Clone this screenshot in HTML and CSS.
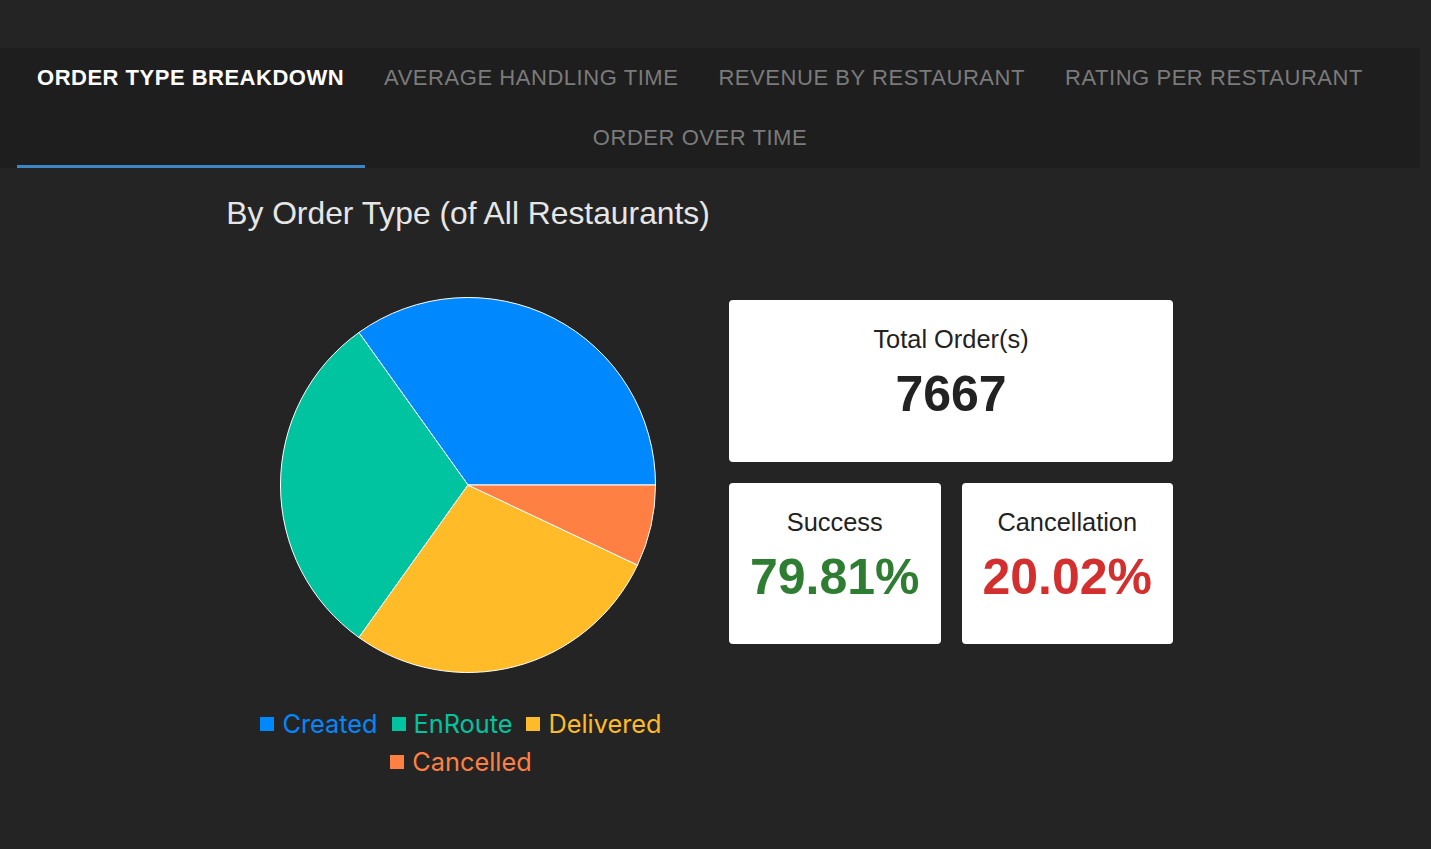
FILE: index.html
```html
<!DOCTYPE html>
<html lang="en">
<head>
<meta charset="utf-8">
<title>Order Type Breakdown</title>
<link rel="stylesheet" href="styles.css">
</head>
<body>
<div class="page">
  <div class="tabbar">
    <div class="tabs">
      <div class="tab active">Order Type Breakdown</div>
      <div class="tab">Average Handling Time</div>
      <div class="tab">Revenue by Restaurant</div>
      <div class="tab">Rating per Restaurant</div>
      <div class="tab">Order over Time</div>
    </div>
    <div class="indicator"></div>
  </div>

  <div class="content">
    <div class="left">
      <h2 class="title">By Order Type (of All Restaurants)</h2>
      <svg class="pie" width="380" height="380" viewBox="0 0 380 380">
        <g transform="translate(190,190)" stroke="#ffffff" stroke-width="1" stroke-linejoin="round">
          <path fill="#0088FE" d="M0 0 L187.5 0 A187.5 187.5 0 0 0 -109.1 -152.5 Z"/>
          <path fill="#00C49F" d="M0 0 L-109.1 -152.5 A187.5 187.5 0 0 0 -109.1 152.5 Z"/>
          <path fill="#FFBB28" d="M0 0 L-109.1 152.5 A187.5 187.5 0 0 0 169.5 80.1 Z"/>
          <path fill="#FF8042" d="M0 0 L169.5 80.1 A187.5 187.5 0 0 0 187.5 0 Z"/>
        </g>
      </svg>
      <ul class="legend">
        <li class="item created"><span class="swatch"></span>Created</li>
        <li class="item enroute"><span class="swatch"></span>EnRoute</li>
        <li class="item delivered"><span class="swatch"></span>Delivered</li>
        <li class="item cancelled"><span class="swatch"></span>Cancelled</li>
      </ul>
    </div>

    <div class="right">
      <div class="card card-total">
        <div class="card-label">Total Order(s)</div>
        <div class="card-value">7667</div>
      </div>
      <div class="card-row">
        <div class="card">
          <div class="card-label">Success</div>
          <div class="card-value success">79.81%</div>
        </div>
        <div class="card">
          <div class="card-label">Cancellation</div>
          <div class="card-value cancel">20.02%</div>
        </div>
      </div>
    </div>
  </div>
</div>
</body>
</html>
```

FILE: styles.css
```css
html, body {
  margin: 0;
  padding: 0;
  background: #242424;
  width: 1431px;
  height: 849px;
  overflow: hidden;
  font-family: "Liberation Sans", Arial, sans-serif;
}

.page {
  padding-top: 48px;
}

.tabbar {
  position: relative;
  width: 1420px;
  box-sizing: border-box;
  padding: 0 37px 0 17px;
  background: #1e1e1e;
  height: 120px;
}

.tabs {
  display: flex;
  flex-wrap: wrap;
  justify-content: center;
}

.tab {
  height: 60px;
  padding: 0 20px;
  display: flex;
  align-items: center;
  text-transform: uppercase;
  font-size: 22px;
  letter-spacing: 0.55px;
  color: #7b7b7b;
  white-space: nowrap;
}

.tab.active {
  color: #ffffff;
  font-weight: bold;
  letter-spacing: 0.5px;
}

.indicator {
  position: absolute;
  left: 17px;
  bottom: 0;
  width: 348px;
  height: 3px;
  background: #3d86c6;
}

.content {
  display: flex;
  padding-left: 227px;
  gap: 20px;
}

.left {
  width: 482px;
  display: flex;
  flex-direction: column;
  align-items: center;
}

.title {
  margin: 27px 0 0;
  font-weight: normal;
  font-size: 31.8px;
  line-height: 36px;
  color: #e6e6e6;
  white-space: nowrap;
}

.pie {
  display: block;
  margin-top: 64px;
}

.legend {
  list-style: none;
  margin: 30px 0 0;
  padding: 0 14px 0 0;
  width: 420px;
  display: flex;
  flex-wrap: wrap;
  justify-content: center;
  column-gap: 14px;
  font-family: Inter, "Noto Sans", sans-serif;
  font-size: 25.3px;
  line-height: 38px;
}

.item {
  display: flex;
  align-items: center;
}

.swatch {
  width: 14px;
  height: 14px;
  margin-right: 8px;
  background: currentColor;
}

.created { color: #0088FE; }
.enroute { color: #00C49F; }
.delivered { color: #FFBB28; }
.cancelled { color: #FF8042; }

.right {
  width: 444px;
  margin-top: 132px;
  display: flex;
  flex-direction: column;
  gap: 21px;
}

.card {
  background: #ffffff;
  border-radius: 4px;
  height: 161px;
  box-sizing: border-box;
  padding-top: 24px;
  text-align: center;
  color: #222222;
}

.card-total {
  height: 162px;
}

.card-row {
  display: grid;
  grid-template-columns: 1fr 1fr;
  gap: 21px;
}

.card-label {
  font-size: 25.4px;
  line-height: 30px;
}

.card-value {
  margin-top: 10px;
  font-size: 50px;
  line-height: 60px;
  font-weight: bold;
  color: #222222;
}

.card-value.success { color: #2e7d32; }
.card-value.cancel { color: #d32f2f; }
```
